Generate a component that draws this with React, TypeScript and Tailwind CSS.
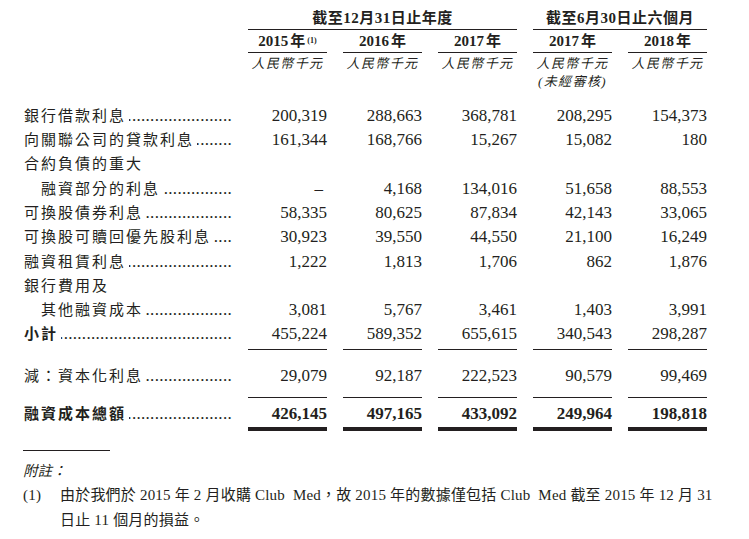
import React from "react";

const FONT = { fontFamily: '"Liberation Serif", "Noto Sans CJK TC", serif' };

type RowProps = {
  label: string;
  values?: string[];
  indent?: boolean;
  bold?: boolean;
  labelBold?: boolean;
  dots?: boolean;
  rowClass?: string;
  cellClass?: string;
};

function Dots() {
  return (
    <span className="ml-[3px] flex min-w-0 flex-1 justify-end overflow-hidden text-[17px] tracking-[0.3px]">
      <span>{".".repeat(80)}</span>
    </span>
  );
}

function Row({
  label,
  values,
  indent,
  bold,
  labelBold,
  dots = true,
  rowClass = "",
  cellClass = "leading-[24.3px]",
}: RowProps) {
  return (
    <div className={`grid grid-cols-[208px_repeat(5,79px)] items-start gap-x-4 ${rowClass}`}>
      <div
        className={`flex h-[24.3px] items-center overflow-hidden whitespace-nowrap leading-[24.3px] ${
          indent ? "pl-[17px]" : ""
        }`}
      >
        <span className={`text-[15px] tracking-[2px] ${bold || labelBold ? "font-bold" : ""}`}>{label}</span>
        {dots && <Dots />}
      </div>
      {(values ?? ["", "", "", "", ""]).map((v, i) => (
        <div
          key={i}
          className={`text-right text-[17px] ${bold ? "font-bold" : ""} ${cellClass} ${v === "–" ? "pr-[4px]" : ""}`}
        >
          {v || "\u00a0"}
        </div>
      ))}
    </div>
  );
}

export default function App() {
  return (
    <div className="h-[539px] w-[749px] overflow-hidden bg-white text-[#231f20]" style={FONT}>
      <div className="pl-[24px]">
        {/* Header */}
        <div className="grid grid-cols-[208px_repeat(5,79px)] gap-x-4 pt-[7px]">
          <div />
          <div className="col-span-3 border-b border-[#231f20] text-center text-[15px] font-bold leading-[22px] tracking-[0.5px]">
            截至12月31日止年度
          </div>
          <div className="col-span-2 border-b border-[#231f20] text-center text-[15px] font-bold leading-[22px] tracking-[0.5px]">
            截至6月30日止六個月
          </div>
        </div>
        <div className="grid grid-cols-[208px_repeat(5,79px)] gap-x-4">
          <div />
          {["2015", "2016", "2017", "2017", "2018"].map((y, i) => (
            <div key={i} className="border-b border-[#231f20] text-center text-[15px] font-bold leading-[22px]">
              {y}
              <span className="ml-[2px]">年</span>
              {i === 0 && <sup className="relative -top-[3px] ml-[2px] text-[8px] font-bold">(1)</sup>}
            </div>
          ))}
        </div>
        <div className="grid grid-cols-[208px_repeat(5,79px)] gap-x-4 pt-[2px]">
          <div />
          {[0, 1, 2, 3, 4].map((i) => (
            <div key={i} className="text-center text-[13px] italic leading-[18px] tracking-[1.4px]">
              <div>人民幣千元</div>
              {i === 3 && <div>(未經審核)</div>}
            </div>
          ))}
        </div>

        {/* Body */}
        <div className="pt-[12.8px]">
          <Row label="銀行借款利息" values={["200,319", "288,663", "368,781", "208,295", "154,373"]} />
          <Row label="向關聯公司的貸款利息" values={["161,344", "168,766", "15,267", "15,082", "180"]} />
          <Row label="合約負債的重大" dots={false} />
          <Row label="融資部分的利息" indent values={["–", "4,168", "134,016", "51,658", "88,553"]} />
          <Row label="可換股債券利息" values={["58,335", "80,625", "87,834", "42,143", "33,065"]} />
          <Row label="可換股可贖回優先股利息" values={["30,923", "39,550", "44,550", "21,100", "16,249"]} />
          <Row label="融資租賃利息" values={["1,222", "1,813", "1,706", "862", "1,876"]} />
          <Row label="銀行費用及" dots={false} />
          <Row label="其他融資成本" indent values={["3,081", "5,767", "3,461", "1,403", "3,991"]} />
          <Row
            label="小計"
            labelBold
            values={["455,224", "589,352", "655,615", "340,543", "298,287"]}
            cellClass="leading-[24.3px] pb-[2px] border-b border-[#231f20]"
          />
          <Row
            label="減：資本化利息"
            values={["29,079", "92,187", "222,523", "90,579", "99,469"]}
            rowClass="mt-[14px]"
            cellClass="leading-[24.3px] pb-[9px] border-b border-[#231f20]"
          />
          <Row
            label="融資成本總額"
            bold
            values={["426,145", "497,165", "433,092", "249,964", "198,818"]}
            rowClass="mt-[4px]"
            cellClass="leading-[24.3px] pb-[1px] border-b-4 border-[#231f20]"
          />
        </div>
      </div>

      {/* Footnote */}
      <div className="pl-[23px] pt-[19px]">
        <div className="h-px w-[87px] bg-[#231f20]" />
        <div className="mt-[8px] text-[14.5px] italic leading-[24px]">附註：</div>
        <div className="flex whitespace-nowrap text-[15px] leading-[24.5px] tracking-[0.2px]">
          <div className="w-[37px] shrink-0">(1)</div>
          <div>
            由於我們於 2015 年 2 月收購 Club&nbsp; Med，故 2015 年的數據僅包括 Club&nbsp; Med 截至 2015 年 12 月 31
            <br />
            日止 11 個月的損益。
          </div>
        </div>
      </div>
    </div>
  );
}
